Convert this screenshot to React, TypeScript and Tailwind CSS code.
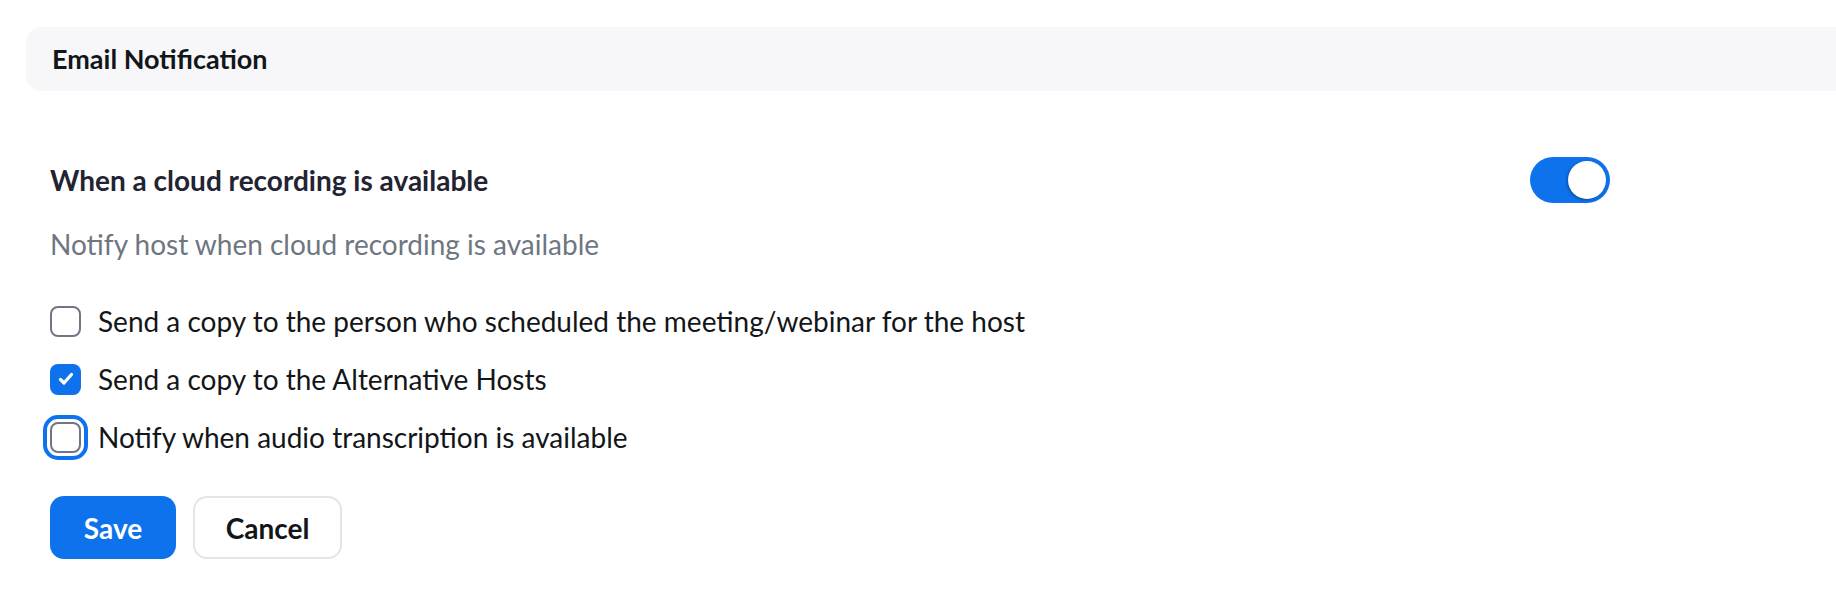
import { useState } from "react";

function Checkbox({ checked, focused }: { checked: boolean; focused?: boolean }) {
  return (
    <span
      className={`flex h-[31px] w-[31px] shrink-0 items-center justify-center rounded-[8px] ${
        checked ? "bg-[#0e72ed]" : "border-[2px] border-[#747487] bg-white"
      } ${focused ? "outline-[4px] outline-solid outline-[#0e72ed] outline-offset-[3px]" : ""}`}
    >
      {checked && (
        <svg width="20" height="20" viewBox="0 0 20 20" fill="none">
          <path d="M4.5 10.5l3.5 3.5 7.5-8.5" stroke="white" strokeWidth="3.2" strokeLinecap="round" strokeLinejoin="round" />
        </svg>
      )}
    </span>
  );
}

export default function App() {
  const [options] = useState([
    { label: "Send a copy to the person who scheduled the meeting/webinar for the host", checked: false },
    { label: "Send a copy to the Alternative Hosts", checked: true },
    { label: "Notify when audio transcription is available", checked: false, focused: true },
  ]);

  return (
    <div className="h-[602px] w-[1836px] overflow-hidden bg-white font-['Lato','Noto_Sans',sans-serif]">
      <div className="ml-[26px] mt-[27px] flex h-[64px] items-center rounded-l-[16px] bg-[#f7f7fa] pl-[26px] text-[27px] font-bold text-[#131619]">
        Email Notification
      </div>

      <div className="pl-[50px]">
        <div className="mt-[66px] flex h-[46px] w-[1560px] items-center justify-between">
          <div className="text-[28px] font-bold text-[#232333]">When a cloud recording is available</div>
          <div className="flex h-[46px] w-[80px] items-center justify-end rounded-full bg-[#0e72ed] p-[4px]">
            <span className="h-[38px] w-[38px] rounded-full bg-white shadow-[-1px_1px_3px_rgba(0,0,0,0.35)]" />
          </div>
        </div>

        <div className="mt-[20px] h-[42px] text-[28px] leading-[42px] text-[#6e7680]">
          Notify host when cloud recording is available
        </div>

        <div className="mt-[35px] flex flex-col gap-[16px]">
          {options.map((o) => (
            <label key={o.label} className="flex h-[42px] items-center gap-[17px] text-[28px] text-[#131619]">
              <Checkbox checked={o.checked} focused={o.focused} />
              <span>{o.label}</span>
            </label>
          ))}
        </div>

        <div className="mt-[38px] flex gap-[17px]">
          <button className="h-[63px] w-[126px] rounded-[14px] bg-[#0e72ed] text-[28px] font-bold text-white">
            Save
          </button>
          <button className="h-[63px] w-[149px] rounded-[14px] border-[2px] border-[#e4e4ea] bg-white text-[28px] font-bold text-[#131619]">
            Cancel
          </button>
        </div>
      </div>
    </div>
  );
}
